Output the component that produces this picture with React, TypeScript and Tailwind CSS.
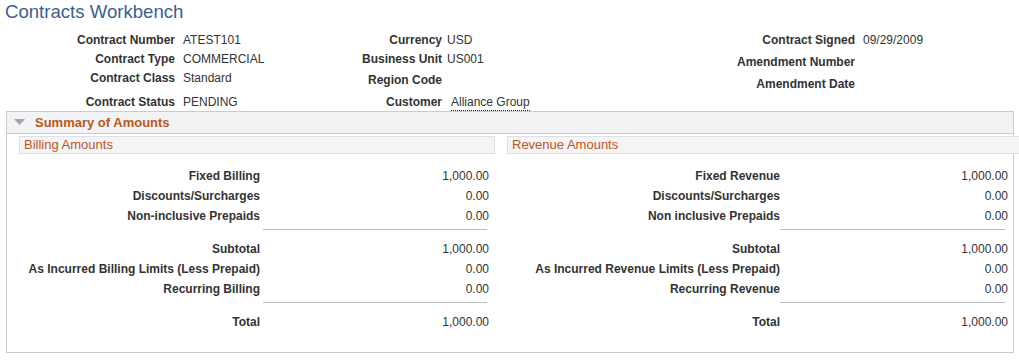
import React from "react";

const font = { fontFamily: '"Liberation Sans", Arial, sans-serif' };

function HRow({
  label,
  value,
  labelW,
  gap,
  extra = "",
  valueClass = "",
}: {
  label: string;
  value?: React.ReactNode;
  labelW: string;
  gap: string;
  extra?: string;
  valueClass?: string;
}) {
  return (
    <div className={`flex h-[19px] items-center ${extra}`}>
      <div className={`${labelW} shrink-0 text-right font-bold text-[12px] text-[#333333]`}>{label}</div>
      <div className={`${gap} text-[12px] text-[#333333] whitespace-nowrap ${valueClass}`}>{value}</div>
    </div>
  );
}

function ARow({ label, value, labelW, valueW }: { label: string; value: string; labelW: string; valueW: string }) {
  return (
    <div className="flex h-[20px] items-center pt-[1px]">
      <div className={`${labelW} shrink-0 text-right font-bold text-[12px] text-[#333333] whitespace-nowrap`}>{label}</div>
      <div className={`${valueW} shrink-0 text-right text-[12px] text-[#333333] ml-[3px]`}>{value}</div>
    </div>
  );
}

function Rule({ left, width }: { left: string; width: string }) {
  return <div className={`${left} ${width} h-px bg-[#b9bec3]`} />;
}

function AmountsCol({
  title,
  headerW,
  labelW,
  valueW,
  lineLeft,
  lineW,
  rows1,
  rows2,
  total,
}: {
  title: string;
  headerW: string;
  labelW: string;
  valueW: string;
  lineLeft: string;
  lineW: string;
  rows1: [string, string][];
  rows2: [string, string][];
  total: string;
}) {
  return (
    <div className="flex flex-col">
      <div className={`${headerW} h-[18px] border border-[#dde1e4] bg-[#f2f4f5] flex items-center pl-[4px] text-[13px] text-[#c0561c]`}>
        {title}
      </div>
      <div className="mt-[11px]">
        {rows1.map(([l, v]) => (
          <ARow key={l} label={l} value={v} labelW={labelW} valueW={valueW} />
        ))}
      </div>
      <div className="mt-[4px] mb-[8px]">
        <Rule left={lineLeft} width={lineW} />
      </div>
      <div>
        {rows2.map(([l, v]) => (
          <ARow key={l} label={l} value={v} labelW={labelW} valueW={valueW} />
        ))}
      </div>
      <div className="mt-[4px] mb-[8px]">
        <Rule left={lineLeft} width={lineW} />
      </div>
      <ARow label="Total" value={total} labelW={labelW} valueW={valueW} />
    </div>
  );
}

export default function App() {
  return (
    <div className="w-[1019px] h-[360px] bg-white overflow-hidden" style={font}>
      <div className="h-[30px] pl-[5px] pt-[1px] text-[18.6px] leading-[22px] text-[#3a5f90]">Contracts Workbench</div>
      <div className="flex h-[81px]">
        <div className="w-[340px] shrink-0">
          <HRow label="Contract Number" value="ATEST101" labelW="w-[175px]" gap="ml-[8px]" valueClass="text-[#24478c]" />
          <HRow label="Contract Type" value="COMMERCIAL" labelW="w-[175px]" gap="ml-[8px]" />
          <HRow label="Contract Class" value="Standard" labelW="w-[175px]" gap="ml-[8px]" />
          <HRow label="Contract Status" value="PENDING" labelW="w-[175px]" gap="ml-[8px]" extra="mt-[5px]" />
        </div>
        <div className="w-[340px] shrink-0">
          <HRow label="Currency" value="USD" labelW="w-[102px]" gap="ml-[5px]" />
          <HRow label="Business Unit" value="US001" labelW="w-[102px]" gap="ml-[5px]" />
          <HRow label="Region Code" value="" labelW="w-[102px]" gap="ml-[5px]" extra="mt-[2px]" />
          <HRow
            label="Customer"
            value={<span className="border-b border-dotted border-[#222] pb-[1px]">Alliance Group</span>}
            labelW="w-[102px]"
            gap="ml-[9px]"
            extra="mt-[3px]"
          />
        </div>
        <div className="w-[339px] shrink-0">
          <HRow label="Contract Signed" value="09/29/2009" labelW="w-[175px]" gap="ml-[8px]" />
          <HRow label="Amendment Number" value="" labelW="w-[175px]" gap="ml-[8px]" extra="mt-[3px]" />
          <HRow label="Amendment Date" value="" labelW="w-[175px]" gap="ml-[8px]" extra="mt-[3px]" />
        </div>
      </div>
      <div className="ml-[6px] w-[1008px] h-[242px] border border-[#c6ccd1]">
        <div className="h-[22px] bg-[#f1f3f4] border-b border-[#c6ccd1] flex items-center">
          <svg width="11" height="7" viewBox="0 0 11 7" className="ml-[7px] mt-[-1px]">
            <polygon points="0,0 11,0 5.5,6" fill="#a3a7ab" />
          </svg>
          <span className="ml-[10px] font-bold text-[13px] text-[#b9581c]">Summary of Amounts</span>
        </div>
        <div className="flex pl-[12px] mt-[2px]">
          <AmountsCol
            title="Billing Amounts"
            headerW="w-[476px]"
            labelW="w-[241px]"
            valueW="w-[226px]"
            lineLeft="ml-[244px]"
            lineW="w-[224px]"
            rows1={[
              ["Fixed Billing", "1,000.00"],
              ["Discounts/Surcharges", "0.00"],
              ["Non-inclusive Prepaids", "0.00"],
            ]}
            rows2={[
              ["Subtotal", "1,000.00"],
              ["As Incurred Billing Limits (Less Prepaid)", "0.00"],
              ["Recurring Billing", "0.00"],
            ]}
            total="1,000.00"
          />
          <div className="ml-[12px]">
            <AmountsCol
              title="Revenue Amounts"
              headerW="w-[520px]"
              labelW="w-[273px]"
              valueW="w-[225px]"
              lineLeft="ml-[273px]"
              lineW="w-[225px]"
              rows1={[
                ["Fixed Revenue", "1,000.00"],
                ["Discounts/Surcharges", "0.00"],
                ["Non inclusive Prepaids", "0.00"],
              ]}
              rows2={[
                ["Subtotal", "1,000.00"],
                ["As Incurred Revenue Limits (Less Prepaid)", "0.00"],
                ["Recurring Revenue", "0.00"],
              ]}
              total="1,000.00"
            />
          </div>
        </div>
      </div>
    </div>
  );
}
